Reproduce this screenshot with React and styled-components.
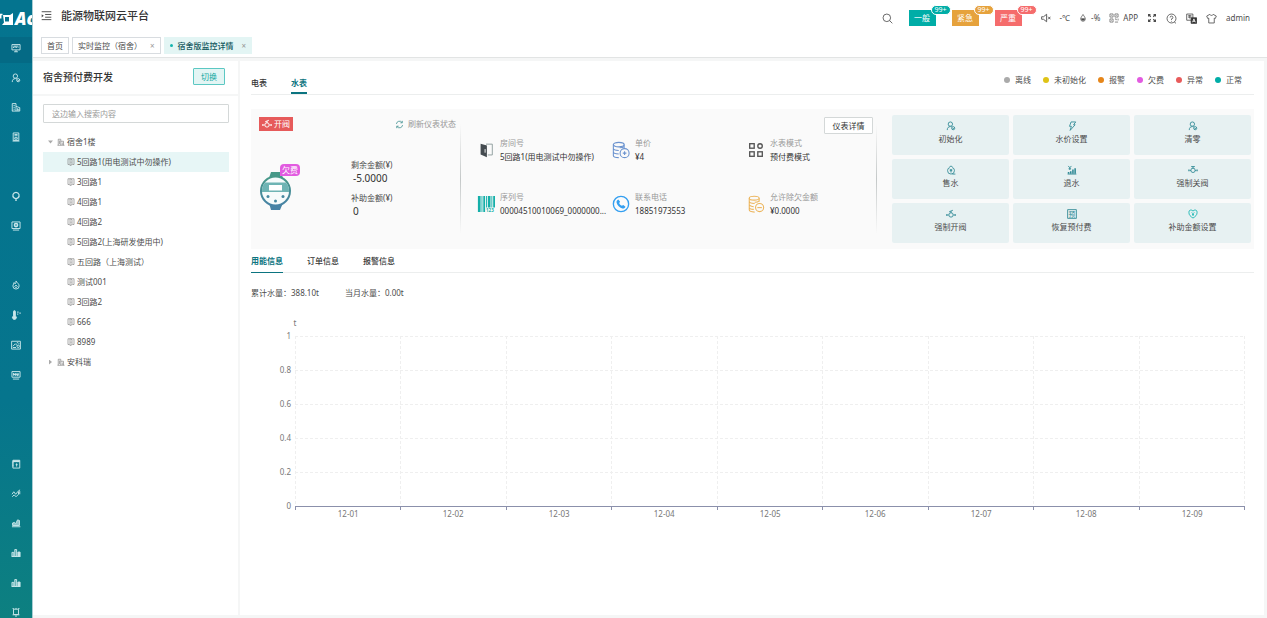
import { useLayoutEffect, useRef, useState } from "react";
import styled, { createGlobalStyle, css } from "styled-components";

const GlobalStyle = createGlobalStyle`
  * {
    box-sizing: border-box;
  }
  body {
    margin: 0;
    background: #f5f6f6;
    color: #4c4c4c;
    font-family: "Noto Sans", "Noto Sans CJK SC", sans-serif;
    font-size: 8px;
    line-height: 12px;
  }
  button,
  input {
    font: inherit;
    color: inherit;
  }
  button {
    padding: 0;
    border: 0;
    background: none;
    cursor: pointer;
  }
  a {
    color: inherit;
    text-decoration: none;
  }
  ul {
    list-style: none;
    margin: 0;
    padding: 0;
  }
`;

// all small icons share a 16x16 grid
const icons = {
  monitor: (
    <>
      <path d="M1.5 2.5h13v8.5h-13zM5 14h6M8 11v3" />
      <path d="M4 8V6M6.500 8V5M9 8V6M4 5h8M11.500 8V7" />
    </>
  ),
  user: (
    <>
      <circle cx="7" cy="5" r="3.500" />
      <path d="M2 14.500c0-4 2-5.500 5-5.500M9 9l-1.500-1" />
      <circle cx="11.500" cy="11.500" r="2.500" />
      <path d="M10.500 11.500l1 1 1.500-1.500" />
    </>
  ),
  building: (
    <>
      <path d="M2 14.500V2.500h6v12M8 7l6 2v5.500H1.500M4 5.500h2M4 8.500h2M4 11.500h2M10.500 10v4M12.500 11v3" />
    </>
  ),
  device: (
    <>
      <path d="M3.500 1.500h9v12h-9zM2.500 14.500h11M5.500 4h5M5.500 6h5M6 9h4v2.500H6z" />
    </>
  ),
  bulb: (
    <>
      <path d="M8 2a5 5 0 0 1 3 9l-3 1.500L5 11a5 5 0 0 1 3-9z" strokeWidth="2" />
      <path d="M6.500 14.500h3" strokeWidth="2" />
    </>
  ),
  camera: (
    <>
      <path d="M1.500 1.500h13v10.500h-13zM3 14.500h10" />
      <circle cx="8" cy="6.500" r="2.500" strokeWidth="2.500" />
    </>
  ),
  fire: (
    <>
      <path d="M8 1.500c1 3 5 4 5 8a5 5 0 0 1-10 0c0-2.500 2-3.500 2-5.500 1 1 1 2 1.500 2.500C8 5 8 3 8 1.500z" />
      <path d="M8 8l2 2.500-2 2-2-2z" />
    </>
  ),
  thermo: (
    <>
      <path d="M4 2.500v7a3 3 0 1 0 3 0v-7a1.500 1.500 0 0 0-3 0z" fill="currentColor" />
      <path d="M10 3.500h2M10 6.500h1.500M14.500 4v2" strokeWidth="2" />
    </>
  ),
  picture: (
    <>
      <path d="M1 2h14v12.500H1zM3 10l4-4 3 3M3 12h5" />
      <circle cx="11.500" cy="10" r="2" />
      <path d="M9 5l2-1 2 2" />
    </>
  ),
  screen: (
    <>
      <path d="M1.500 2.500h13v9h-13zM3 14.500h10M4 9V5l3 4V5M9.500 5v4h2V5M4 7h8" />
    </>
  ),
  ledger: (
    <>
      <path d="M3 2h11v12.500H3zM1.500 5h3M1.500 8h3M1.500 11h3" />
      <path d="M3 3.500h11" strokeWidth="3" />
      <path d="M9 7v5M7.500 9h3" />
    </>
  ),
  trend: (
    <>
      <path d="M1.500 10l3-4 3 4 4-5 3-2" />
      <path d="M2 14l3-3 3 3 4-4V6M14 5v5" />
    </>
  ),
  areaChart: (
    <>
      <path d="M1.500 14h13.500M2.500 12V8l3-1 2 2 3-6 3 1v8z" fill="currentColor" fillOpacity="0.700" />
    </>
  ),
  barChart: (
    <>
      <path d="M1.500 13.500V7h3v6.500zM6 13.500v-11h3v11z" fill="currentColor" fillOpacity="0.400" />
      <path d="M11 13.500v-7h3.500v7zM1 13.500h14" fill="currentColor" />
    </>
  ),
  bell: (
    <>
      <path d="M4 3.500h8v8.500H4zM2.500 2.500h2M11.500 2.500h2M2.500 12.500h11M6.500 14.500h3M8 1.500v2" />
    </>
  ),
  fold: (
    <>
      <path d="M1 2.500h14M6 6.500h9M6 10.500h9M1 14h14" />
      <path d="M1 6l3 2.500L1 11z" fill="currentColor" stroke="none" />
    </>
  ),
  search: (
    <>
      <circle cx="7" cy="7" r="5.500" />
      <path d="M11 11l4 4" />
    </>
  ),
  mute: (
    <>
      <path d="M1 6h3l5-4v12l-5-4H1zM11.500 6l3.500 4M15 6l-3.500 4" />
    </>
  ),
  drop: (
    <>
      <path d="M8 1c2 3.500 4.500 5.500 4.500 9a4.500 4.500 0 0 1-9 0C3.500 6.500 6 4.500 8 1z" />
      <path d="M5 9.500h6a3 3 0 0 1-6 0z" fill="currentColor" />
    </>
  ),
  qr: (
    <>
      <path d="M1.500 1.500h5v5h-5zM9.500 1.500h5v5h-5zM1.500 9.500h5v5h-5zM9.500 9.500h2v2M14.500 9v3M9.500 14.500h5M4 3.500v1M12 3.500v1M4 11.500v1" />
    </>
  ),
  full: (
    <>
      <path d="M2.500 5.500v-3h3M13.500 5.500v-3h-3M2.500 10.500v3h3M13.500 10.500v3h-3M3 3l3 3M13 3l-3 3M3 13l3-3M13 13l-3-3" strokeWidth="1.800" />
    </>
  ),
  help: (
    <>
      <circle cx="8" cy="8" r="6.500" />
      <path d="M6 6.500a2 2 0 1 1 2 2v1.500M8 11.500v1M12 13l2.500 2" />
    </>
  ),
  translate: (
    <>
      <path d="M1 1.500h9v9H1zM3 4h5M3 6h5M5.500 3v5" />
      <path d="M7.500 7h8v8h-8z" fill="#333" stroke="#333" />
      <path d="M9.500 13.500l2-5 2 5M10 12h3" stroke="#fff" />
    </>
  ),
  shirt: (
    <>
      <path d="M5.500 2L1 4.500 2.500 8 4 7.500v7h8v-7l1.500.500L15 4.500 10.500 2c-.500 2-4.500 2-5 0z" />
    </>
  ),
  door: (
    <>
      <path d="M5 13H2V1.500h12V13h-3M6 1.500V15l4-1.500V3.500L7 1.500" />
      <path d="M8 7.500v2" />
    </>
  ),
  house: (
    <>
      <path d="M2.500 14.500V2.500h5v12M7.500 6.500H13v8M1 14.500h14M5 5v7M10.500 9v5" />
    </>
  ),
  refresh: (
    <>
      <path d="M2.500 7a5.500 5.500 0 0 1 10-2.500M13.500 9a5.500 5.500 0 0 1-10 2.500M13 1.500v3.500H9.500M3 14.500V11h3.500" />
    </>
  ),
  valve: (
    <>
      <path d="M5 2.500h6M8 2.500V6M4.500 8.500a3.500 3.500 0 0 1 7 0 3.500 3.500 0 0 1-7 0z" />
      <path d="M1.500 7v3M4 8v1M14.500 7v3M12 8v1" strokeWidth="2" />
    </>
  ),
  valveOpen: (
    <>
      <path d="M5 4.500l6-2.500M8 3v3.500M4.500 9.500a3.500 3.500 0 0 1 7 0 3.500 3.500 0 0 1-7 0z" />
      <path d="M1.500 8v3M4 9v1M14.500 8v3M12 9v1" strokeWidth="2" />
    </>
  ),
  flash: (
    <>
      <path d="M6.500 1.500H14L10.500 6H13l-8 9 2-6.500H4z" />
    </>
  ),
  buyWater: (
    <>
      <path d="M8 1.500c2 1.500 5.500 4 5.500 7.500a5.500 5.500 0 0 1-11 0C2.500 5.500 6 3 8 1.500zM10 14.500h5" />
      <path d="M6 6l2 2.500L10 6M8 8.500V12M6 9h4" />
    </>
  ),
  refund: (
    <>
      <path d="M2 1.500l2.500 3 2.500-3M4.500 4.500V8M2.500 6h4M1 14.500h14" />
      <path d="M2.500 14v-3M6 14v-4M9.500 14V7M13 14V5" strokeWidth="2.500" />
    </>
  ),
  heart: (
    <>
      <path d="M8 14.500C4 12 1.500 9.500 1.500 6A3.500 3.500 0 0 1 8 3.500 3.500 3.500 0 0 1 14.500 6c0 3.500-2.500 6-6.500 8.500z" />
      <path d="M6 5.500l2 2 2-2M8 7.500v3.500M6.500 9h3" />
    </>
  ),
  prepaid: (
    <>
      <path d="M1 1h14v14H1z" />
      <text x="8" y="12" fontSize="11" textAnchor="middle" fill="currentColor" stroke="none">
        预
      </text>
    </>
  ),
};

const Icon = ({ name, size = 10, weight = 1.4 }) => (
  <svg
    width={size}
    height={size}
    viewBox="0 0 16 16"
    fill="none"
    stroke="currentColor"
    strokeWidth={weight}
    aria-hidden="true"
  >
    {icons[name]}
  </svg>
);

const Logo = () => (
  <svg width="48" height="20" viewBox="0 0 48 20" aria-label="Ac">
    <path d="M0 5.500h2.500M0.700 5.500v4" fill="none" stroke="#fff" strokeWidth="1.500" />
    <path d="M3 6h7l3-2v12H2l2-2.500zM5 8v4.500h4V8z" fill="#fff" fillRule="evenodd" />
    <text x="15" y="16" fill="#fff" fontSize="17" fontWeight="800" fontStyle="italic" fontFamily="Open Sans, sans-serif">
      Ac
    </text>
  </svg>
);

const MeterIcon = () => (
  <svg width="33" height="40" viewBox="0 0 33 40" aria-hidden="true">
    <defs>
      <linearGradient id="meter" x1="0" y1="0" x2="0" y2="1">
        <stop offset="0" stopColor="#469a86" />
        <stop offset="1" stopColor="#4781a6" />
      </linearGradient>
    </defs>
    <path d="M12 1h10l2 6H10zM10 32h14l-3 7h-9z" fill="url(#meter)" />
    <circle cx="16.500" cy="20" r="15.500" fill="url(#meter)" />
    <circle cx="16.500" cy="20" r="13.500" fill="#f6fbfb" />
    <path d="M3 21a13.500 13.500 0 0 1 3-9.500h21a13.500 13.500 0 0 1 3 9.500z" fill="#6eb4b4" />
    <path d="M10 14h13v5.500H10z" fill="#fff" />
    <g fill="#4788a0">
      <circle cx="9" cy="25.500" r="1.500" />
      <circle cx="24" cy="25.500" r="1.500" />
      <circle cx="16.500" cy="30" r="1.500" />
    </g>
  </svg>
);

const infoIcons = {
  room: (
    <>
      <path d="M10 3.500h7v12h-5" fill="none" stroke="#8a9a9a" />
      <path d="M4 3l7 2v13l-7-3z" fill="#444b50" />
      <path d="M9 9v4" stroke="#fff" />
    </>
  ),
  coins: (
    <g fill="none" stroke="#6b93cf" strokeWidth="1.200">
      <ellipse cx="7.500" cy="4" rx="6" ry="2.500" />
      <path d="M1.500 4v12c0 1.500 3 2.500 6 2.500M13.500 4v4M1.500 8c0 1.500 3 2.500 6 2.500M1.500 12c0 1.500 3 2.500 6 2.500M13.500 6c-1 1-3 1.500-5 1.500" />
      <circle cx="14" cy="13.500" r="5" />
      <path d="M14 11.500v4M12 13.500h4" />
    </g>
  ),
  mode: (
    <g fill="none" stroke="#555" strokeWidth="1.500">
      <rect x="3" y="3" width="5" height="5" />
      <circle cx="14.500" cy="5.500" r="2.500" />
      <rect x="3" y="12" width="5" height="5" />
      <rect x="12" y="12" width="5" height="5" />
    </g>
  ),
  barcode: (
    <g fill="#14afa9">
      <path d="M1 1h3v18H1zM5 1h1v18H5zM7 1h2v18H7zM10 1h1v13h-1zM12 1h3v13h-3zM16 1h1v13h-1zM18 1h2v13h-2z" />
      <text x="10" y="19" fontSize="5" fontWeight="700">
        123
      </text>
    </g>
  ),
  phone: (
    <>
      <circle cx="10" cy="10" r="8.500" fill="none" stroke="#349ff0" strokeWidth="1.500" />
      <path d="M7 5l2 2.500-1 1.500c.500 1.500 1.500 2.500 3 3l1.500-1L15 13c-.500 1.500-2 2.500-3.500 2C8 14 5.500 11 5 8c0-1.500 1-2.500 2-3z" fill="#349ff0" />
    </>
  ),
  debt: (
    <g fill="none" stroke="#ecb55c" strokeWidth="1.200">
      <ellipse cx="8" cy="3.500" rx="5.500" ry="2.200" />
      <path d="M2.500 3.500v13c0 1.500 3 2.500 6 2.500M13.500 3.500v4M2.500 7c0 1.500 3 2.500 6 2.500M2.500 10.500c0 1.500 3 2.500 5 2.500M2.500 14c0 1.500 3 2 5 2M13.500 6.500c-1 1-3 1.500-5 1.500" />
      <circle cx="14" cy="14" r="4.500" />
      <path d="M11.500 14h5" />
    </g>
  ),
};

const menu = [
  "monitor",
  "user",
  "building",
  "device",
  null,
  "bulb",
  "camera",
  null,
  "fire",
  "thermo",
  "picture",
  "screen",
  null,
  null,
  "ledger",
  "trend",
  "areaChart",
  "barChart",
  "barChart",
  "bell",
];

const alerts = [
  { label: "一般", color: "#00ada7" },
  { label: "紧急", color: "#e6a23c" },
  { label: "严重", color: "#f56c6c" },
];

const rooms = [
  "5回路1(用电测试中勿操作)",
  "3回路1",
  "4回路1",
  "4回路2",
  "5回路2(上海研发使用中)",
  "五回路（上海测试）",
  "测试001",
  "3回路2",
  "666",
  "8989",
];

const legend = [
  { label: "离线", color: "#aaa" },
  { label: "未初始化", color: "#dfc316" },
  { label: "报警", color: "#e6861a" },
  { label: "欠费", color: "#e25be0" },
  { label: "异常", color: "#e85b5b" },
  { label: "正常", color: "#00ada7" },
];

const info = [
  { icon: "room", label: "房间号", value: "5回路1(用电测试中勿操作)" },
  { icon: "coins", label: "单价", value: "¥4" },
  { icon: "mode", label: "水表模式", value: "预付费模式" },
  { icon: "barcode", label: "序列号", value: "00004510010069_0000000..." },
  { icon: "phone", label: "联系电话", value: "18851973553" },
  { icon: "debt", label: "允许除欠金额", value: "¥0.0000" },
];

const actions = [
  { icon: "user", label: "初始化" },
  { icon: "flash", label: "水价设置" },
  { icon: "user", label: "清零" },
  { icon: "buyWater", label: "售水" },
  { icon: "refund", label: "退水" },
  { icon: "valve", label: "强制关阀" },
  { icon: "valveOpen", label: "强制开阀" },
  { icon: "prepaid", label: "恢复预付费" },
  { icon: "heart", label: "补助金额设置", bright: true },
];

const days = ["12-01", "12-02", "12-03", "12-04", "12-05", "12-06", "12-07", "12-08", "12-09"];
const levels = ["1", "0.8", "0.6", "0.4", "0.2", "0"];

const UsageChart = () => {
  const ref = useRef(null);
  const [width, setWidth] = useState(1003);

  useLayoutEffect(() => {
    const update = () => setWidth(ref.current.clientWidth);
    update();
    window.addEventListener("resize", update);
    return () => window.removeEventListener("resize", update);
  }, []);

  const left = 44;
  const right = width - 10;
  const top = 20;
  const bottom = 190;
  const stepX = (right - left) / days.length;
  const stepY = (bottom - top) / (levels.length - 1);

  return (
    <ChartBox ref={ref}>
      <svg width={width} height="210" role="img" aria-label="当月水量">
        <text x={left} y="10" textAnchor="middle">
          t
        </text>
        {levels.map((level, i) => {
          const y = Math.round(top + i * stepY) + 0.5;
          return (
            <g key={level}>
              {i < levels.length - 1 && <path className="grid" d={`M${left} ${y}H${right}`} />}
              <text x={left - 4} y={y + 2} textAnchor="end">
                {level}
              </text>
            </g>
          );
        })}
        {[...days, ""].map((day, i) => {
          const x = Math.round(left + i * stepX) + 0.5;
          return (
            <g key={day}>
              <path className="grid" d={`M${x} ${top}V${bottom}`} />
              <path className="axis" d={`M${x} ${bottom}v4`} />
              <text x={x + stepX / 2} y={bottom + 11} textAnchor="middle">
                {day}
              </text>
            </g>
          );
        })}
        <path className="axis" d={`M${left} ${bottom + 0.5}H${right + 1}`} />
      </svg>
    </ChartBox>
  );
};

const App = () => {
  const [keyword, setKeyword] = useState("");

  return (
    <Page>
      <GlobalStyle />
      <Sidebar>
        <LogoBox>
          <Logo />
        </LogoBox>
        <Menu>
          {menu.map((name, i) => (
            <MenuItem key={i} $active={i === 0}>
              {name && (
                <a href="#menu" aria-label={name}>
                  <Icon name={name} size={10} weight={1.5} />
                </a>
              )}
            </MenuItem>
          ))}
        </Menu>
      </Sidebar>
      <Body>
        <Header>
          <TopRow>
            <ToolButton aria-label="menu">
              <Icon name="fold" size={11} />
            </ToolButton>
            <h1>能源物联网云平台</h1>
            <Tools>
              <Alerts>
                <ToolButton aria-label="search">
                  <Icon name="search" size={11} weight={1.2} />
                </ToolButton>
                {alerts.map(({ label, color }) => (
                  <Alert key={label} $color={color}>
                    {label}
                    <Badge $color={color}>99+</Badge>
                  </Alert>
                ))}
              </Alerts>
              <ToolButton aria-label="mute">
                <Icon name="mute" />
              </ToolButton>
              <span>-℃</span>
              <Tool>
                <Icon name="drop" size={8} weight={1.5} />
                -%
              </Tool>
              <ToolButton>
                <Icon name="qr" weight={1} />
                APP
              </ToolButton>
              <ToolButton aria-label="fullscreen">
                <Icon name="full" />
              </ToolButton>
              <ToolButton aria-label="help">
                <Icon name="help" size={11} weight={1.2} />
              </ToolButton>
              <ToolButton aria-label="language">
                <Icon name="translate" size={11} weight={1.2} />
              </ToolButton>
              <ToolButton aria-label="theme">
                <Icon name="shirt" size={11} weight={1.2} />
              </ToolButton>
              <ToolButton>admin</ToolButton>
            </Tools>
          </TopRow>
          <PageTabs>
            <PageTab href="#home">首页</PageTab>
            <PageTab href="#monitor">
              实时监控（宿舍）<Close>×</Close>
            </PageTab>
            <PageTab href="#detail" $active>
              <Dot $size={3} $color="#13b5ad" />
              宿舍版监控详情<Close>×</Close>
            </PageTab>
          </PageTabs>
        </Header>
        <Content>
          <TreePanel>
            <TreeHeader>
              <h2>宿舍预付费开发</h2>
              <SwitchButton>切换</SwitchButton>
            </TreeHeader>
            <TreeBody>
              <SearchInput
                aria-label="搜索"
                placeholder="这边输入搜索内容"
                value={keyword}
                onChange={(e) => setKeyword(e.target.value)}
              />
              <ul>
                <TreeNode>
                  <Caret $open />
                  <Icon name="house" size={8} />
                  宿舍1楼
                </TreeNode>
                {rooms.map((room, i) => (
                  <TreeNode key={room} $leaf $active={i === 0}>
                    <Icon name="door" size={8} />
                    {room}
                  </TreeNode>
                ))}
                <TreeNode>
                  <Caret />
                  <Icon name="house" size={8} />
                  安科瑞
                </TreeNode>
              </ul>
            </TreeBody>
          </TreePanel>
          <MainPanel>
            <MeterTabs>
              <Tab>电表</Tab>
              <Tab $active>水表</Tab>
              <Legend>
                {legend.map(({ label, color }) => (
                  <li key={label}>
                    <Dot $size={6} $color={color} />
                    {label}
                  </li>
                ))}
              </Legend>
            </MeterTabs>
            <Card>
              <Meter>
                <MeterTop>
                  <ValveTag>
                    <Icon name="valveOpen" weight={1.5} />
                    开阀
                  </ValveTag>
                  <RefreshButton>
                    <Icon name="refresh" size={9} />
                    刷新仪表状态
                  </RefreshButton>
                </MeterTop>
                <MeterBody>
                  <MeterFigure>
                    <MeterIcon />
                    <DebtTag>欠费</DebtTag>
                  </MeterFigure>
                  <dl>
                    <dt>剩余金额(¥)</dt>
                    <dd>-5.0000</dd>
                    <dt>补助金额(¥)</dt>
                    <dd>0</dd>
                  </dl>
                </MeterBody>
              </Meter>
              <Details>
                <DetailButton>仪表详情</DetailButton>
                <InfoGrid>
                  {info.map(({ icon, label, value }) => (
                    <InfoItem key={label}>
                      <svg width="18" height="18" viewBox="0 0 20 20" aria-hidden="true">
                        {infoIcons[icon]}
                      </svg>
                      <div>
                        <span>{label}</span>
                        <p>{value}</p>
                      </div>
                    </InfoItem>
                  ))}
                </InfoGrid>
              </Details>
              <Actions>
                {actions.map(({ icon, label, bright }) => (
                  <Action key={label} $bright={bright}>
                    <Icon name={icon} />
                    <span>{label}</span>
                  </Action>
                ))}
              </Actions>
            </Card>
            <InfoTabs>
              <Tab $active>用能信息</Tab>
              <Tab>订单信息</Tab>
              <Tab>报警信息</Tab>
            </InfoTabs>
            <Stats>
              <span>累计水量：388.10t</span>
              <span>当月水量：0.00t</span>
            </Stats>
            <UsageChart />
          </MainPanel>
        </Content>
      </Body>
    </Page>
  );
};

const Page = styled.div`
  display: flex;
  height: 100vh;
  overflow: hidden;
`;

const Sidebar = styled.aside`
  display: flex;
  flex-direction: column;
  flex: none;
  width: 33px;
  overflow: hidden;
  border-right: 1px solid #a9cdd3;
  background: linear-gradient(#04748f, #06758d 65%, #0d8080);
`;

const LogoBox = styled.div`
  height: 37px;
  padding-top: 9px;
`;

const Menu = styled.ul`
  display: flex;
  flex-direction: column;
  flex: 1;
  margin-top: -4px;
  margin-bottom: -9px;
`;

const MenuItem = styled.li`
  display: flex;
  flex: 1;
  align-items: center;
  justify-content: center;
  color: #c9e6ea;
  background: ${(props) => (props.$active ? "linear-gradient(transparent 4px, #046a85 4px)" : "none")};
  a {
    display: flex;
  }
`;

const Body = styled.div`
  display: flex;
  flex-direction: column;
  flex: 1;
  min-width: 0;
`;

const Header = styled.header`
  padding: 5px 17px 3px 8px;
  background: #fff;
  border-bottom: 1px solid #e2e4e4;
`;

const TopRow = styled.div`
  display: flex;
  align-items: center;
  height: 26px;
  margin-bottom: 6px;
  h1 {
    margin: 0 0 5px 9px;
    font-size: 11px;
    line-height: 16px;
    font-weight: 500;
    color: #333;
  }
  > button {
    margin-bottom: 6px;
  }
`;

const Tools = styled.div`
  display: flex;
  align-items: center;
  gap: 9px;
  margin-left: auto;
`;

const Tool = styled.span`
  display: flex;
  align-items: center;
  gap: 4px;
`;

const ToolButton = styled.button`
  display: flex;
  align-items: center;
  gap: 4px;
`;

const Alerts = styled.div`
  display: flex;
  align-items: center;
  gap: 16px;
  margin-right: 10px;
`;

const Alert = styled.button`
  position: relative;
  width: 27px;
  height: 16px;
  color: #fff;
  background: ${(props) => props.$color};
`;

const Badge = styled.span`
  position: absolute;
  top: -5px;
  left: 22px;
  width: 20px;
  height: 10px;
  border: 1px solid #fff;
  border-radius: 5px;
  font-size: 7px;
  line-height: 8px;
  background: ${(props) => props.$color};
`;

const PageTabs = styled.nav`
  display: flex;
  gap: 3px;
`;

const PageTab = styled.a`
  display: flex;
  align-items: center;
  height: 17px;
  padding: 0 5px;
  border: 1px solid #d8dce0;
  ${(props) =>
    props.$active &&
    css`
      color: #155a5f;
      font-weight: 500;
      background: #e3f5f4;
      border-color: #e3f5f4;
    `}
`;

const Close = styled.span`
  margin-left: 8px;
  color: #999;
`;

const Dot = styled.i`
  width: ${(props) => props.$size}px;
  height: ${(props) => props.$size}px;
  margin-right: 5px;
  border-radius: 50%;
  background: ${(props) => props.$color};
`;

const Content = styled.div`
  display: flex;
  flex: 1;
  gap: 2px;
  padding: 3px 3px 3px 0;
`;

const TreePanel = styled.section`
  flex: none;
  width: 205px;
  background: #fff;
`;

const TreeHeader = styled.div`
  display: flex;
  align-items: center;
  justify-content: space-between;
  height: 35px;
  padding: 0 13px 2px 10px;
  border-bottom: 2px solid #f5f6f6;
  h2 {
    margin: 0;
    font-size: 10px;
    font-weight: 500;
    color: #333;
  }
`;

const SwitchButton = styled.button`
  width: 32px;
  height: 17px;
  border: 1px solid #5cc8c3;
  border-radius: 1px;
  color: #13a8a2;
  background: #e3f5f4;
`;

const TreeBody = styled.div`
  padding: 8px 9px 8px 10px;
`;

const SearchInput = styled.input`
  display: block;
  width: 100%;
  height: 19px;
  margin-bottom: 9px;
  padding: 0 8px;
  border: 1px solid #d4d8d8;
  border-radius: 1px;
  outline: none;
  &::placeholder {
    color: #999;
  }
`;

const TreeNode = styled.li`
  display: flex;
  align-items: center;
  gap: 2px;
  height: 20px;
  padding-left: ${(props) => (props.$leaf ? "24px" : "5px")};
  background: ${(props) => (props.$active ? "#e7f6f6" : "none")};
  cursor: pointer;
  svg {
    color: #888;
  }
`;

const Caret = styled.i`
  width: 5px;
  height: 5px;
  margin-right: 2px;
  background: #aaa;
  clip-path: ${(props) =>
    props.$open ? "polygon(0 20%, 100% 20%, 50% 80%)" : "polygon(20% 0, 80% 50%, 20% 100%)"};
`;

const MainPanel = styled.main`
  flex: 1;
  min-width: 0;
  padding: 13px 10px 0 11px;
  background: #fff;
`;

const Tab = styled.button`
  height: 100%;
  margin-bottom: -1px;
  color: #333;
  font-weight: 500;
  border-bottom: 2px solid transparent;
  ${(props) =>
    props.$active &&
    css`
      color: #0b7480;
      font-weight: 700;
      border-bottom-color: #0b7480;
    `}
`;

const MeterTabs = styled.div`
  display: flex;
  gap: 24px;
  height: 21px;
  border-bottom: 1px solid #eceeee;
`;

const Legend = styled.ul`
  display: flex;
  gap: 12px;
  margin-left: auto;
  padding-right: 12px;
  li {
    display: flex;
    align-items: center;
    height: 12px;
  }
`;

const Card = styled.section`
  display: grid;
  grid-template-columns: 210fr 416fr 377fr;
  height: 140px;
  margin-top: 14px;
  background: #fafafa;
`;

// vertical line that fades out at both ends
const fadeLine = css`
  background: linear-gradient(transparent, #c4c8c8 50%, transparent) right center / 1px 110px no-repeat;
`;

const Meter = styled.div`
  padding: 8px 5px 0 8px;
  ${fadeLine}
`;

const MeterTop = styled.div`
  display: flex;
  align-items: center;
  justify-content: space-between;
`;

const ValveTag = styled.span`
  display: flex;
  align-items: center;
  gap: 2px;
  height: 14px;
  padding: 0 3px;
  color: #fff;
  background: #e65a5a;
`;

const RefreshButton = styled.button`
  display: flex;
  align-items: center;
  gap: 4px;
  color: #999;
  svg {
    color: #3f8f8f;
  }
`;

const MeterBody = styled.div`
  display: flex;
  align-items: center;
  margin-top: 27px;
  dl {
    margin: 0 0 0 59px;
  }
  dt {
    line-height: 14px;
  }
  dd {
    margin: 0 0 7px 2px;
    font-size: 10px;
    line-height: 12px;
    color: #333;
  }
`;

const MeterFigure = styled.div`
  position: relative;
  svg {
    display: block;
  }
`;

const DebtTag = styled.span`
  position: absolute;
  top: -7px;
  left: 21px;
  width: 20px;
  border-radius: 4px 4px 4px 0;
  color: #fff;
  text-align: center;
  background: #e25be0;
`;

const Details = styled.div`
  display: flex;
  flex-direction: column;
  padding: 8px 4px 0 16px;
  ${fadeLine}
`;

const DetailButton = styled.button`
  align-self: flex-end;
  width: 49px;
  height: 17px;
  border: 1px solid #d4d8d8;
  border-radius: 1px;
  color: #333;
  background: #fff;
`;

const InfoGrid = styled.ul`
  display: grid;
  grid-template-columns: 1fr 1fr 1fr;
  row-gap: 26px;
  margin: 2px -9px 0 0;
`;

const InfoItem = styled.li`
  display: flex;
  align-items: center;
  gap: 5px;
  white-space: nowrap;
  line-height: 14px;
  svg {
    flex: none;
  }
  span {
    color: #999;
  }
  p {
    margin: 0;
    color: #333;
  }
`;

const Actions = styled.div`
  display: grid;
  grid-template-columns: repeat(3, 1fr);
  gap: 4px;
  padding: 6px 3px 6px 15px;
`;

const Action = styled.button`
  display: flex;
  flex-direction: column;
  align-items: center;
  padding-top: 6px;
  border-radius: 2px;
  background: #e7f1f2;
  svg {
    margin-bottom: 2px;
    color: ${(props) => (props.$bright ? "#13b5b1" : "#318a96")};
  }
`;

const InfoTabs = styled.div`
  display: flex;
  gap: 24px;
  height: 24px;
  border-bottom: 1px solid #eceeee;
  button {
    height: 24px;
    border-bottom-width: 1px;
  }
`;

const Stats = styled.div`
  display: flex;
  gap: 26px;
  padding: 14px 0 17px;
`;

const ChartBox = styled.div`
  svg {
    display: block;
  }
  text {
    fill: #777;
  }
  path {
    fill: none;
  }
  .grid {
    stroke: #efefef;
    stroke-dasharray: 3 2;
  }
  .axis {
    stroke: #8b90ab;
  }
`;

export default App;
